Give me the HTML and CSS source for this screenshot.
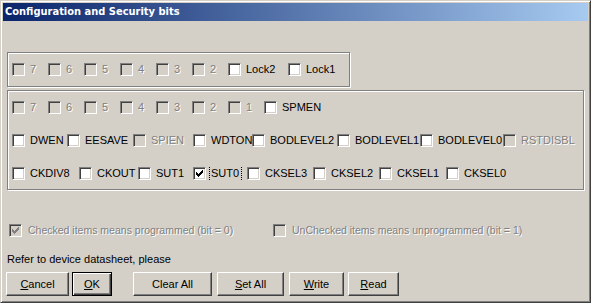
FILE: index.html
```html
<!DOCTYPE html>
<html>
<head>
<meta charset="utf-8">
<link rel="stylesheet" href="styles.css">
</head>
<body>
<div class="window">
  <div class="titlebar">Configuration and Security bits</div>
  <div class="client">
    <div class="group g-lock">
      <div class="row r-lock">
        <label class="item dis"><span class="cb"></span><span class="lbl">7</span></label>
        <label class="item dis"><span class="cb"></span><span class="lbl">6</span></label>
        <label class="item dis"><span class="cb"></span><span class="lbl">5</span></label>
        <label class="item dis"><span class="cb"></span><span class="lbl">4</span></label>
        <label class="item dis"><span class="cb"></span><span class="lbl">3</span></label>
        <label class="item dis"><span class="cb"></span><span class="lbl">2</span></label>
        <label class="item"><span class="cb"></span><span class="lbl">Lock2</span></label>
        <label class="item"><span class="cb"></span><span class="lbl">Lock1</span></label>
      </div>
    </div>
    <div class="group g-fuse">
      <div class="row r-bits">
        <label class="item dis"><span class="cb"></span><span class="lbl">7</span></label>
        <label class="item dis"><span class="cb"></span><span class="lbl">6</span></label>
        <label class="item dis"><span class="cb"></span><span class="lbl">5</span></label>
        <label class="item dis"><span class="cb"></span><span class="lbl">4</span></label>
        <label class="item dis"><span class="cb"></span><span class="lbl">3</span></label>
        <label class="item dis"><span class="cb"></span><span class="lbl">2</span></label>
        <label class="item dis"><span class="cb"></span><span class="lbl">1</span></label>
        <label class="item"><span class="cb"></span><span class="lbl">SPMEN</span></label>
      </div>
      <div class="row r-high">
        <label class="item"><span class="cb"></span><span class="lbl">DWEN</span></label>
        <label class="item"><span class="cb"></span><span class="lbl">EESAVE</span></label>
        <label class="item dis"><span class="cb"></span><span class="lbl">SPIEN</span></label>
        <label class="item"><span class="cb"></span><span class="lbl">WDTON</span></label>
        <label class="item"><span class="cb"></span><span class="lbl">BODLEVEL2</span></label>
        <label class="item"><span class="cb"></span><span class="lbl">BODLEVEL1</span></label>
        <label class="item"><span class="cb"></span><span class="lbl">BODLEVEL0</span></label>
        <label class="item dis"><span class="cb"></span><span class="lbl">RSTDISBL</span></label>
      </div>
      <div class="row r-low">
        <label class="item"><span class="cb"></span><span class="lbl">CKDIV8</span></label>
        <label class="item"><span class="cb"></span><span class="lbl">CKOUT</span></label>
        <label class="item"><span class="cb"></span><span class="lbl">SUT1</span></label>
        <label class="item"><span class="cb"><svg class="chk" width="7" height="7" viewBox="0 0 7 7" shape-rendering="crispEdges"><path d="M6 0h1v1h-1z M5 1h2v1h-2z M0 2h1v1h-1z M4 2h3v1h-3z M0 3h2v1h-2z M3 3h3v1h-3z M0 4h5v1h-5z M1 5h3v1h-3z M2 6h1v1h-1z"/></svg></span><span class="lbl focus">SUT0</span></label>
        <label class="item"><span class="cb"></span><span class="lbl">CKSEL3</span></label>
        <label class="item"><span class="cb"></span><span class="lbl">CKSEL2</span></label>
        <label class="item"><span class="cb"></span><span class="lbl">CKSEL1</span></label>
        <label class="item"><span class="cb"></span><span class="lbl">CKSEL0</span></label>
      </div>
    </div>
    <div class="legend">
      <label class="item dis"><span class="cb"><svg class="chk" width="7" height="7" viewBox="0 0 7 7" shape-rendering="crispEdges"><path d="M6 0h1v1h-1z M5 1h2v1h-2z M0 2h1v1h-1z M4 2h3v1h-3z M0 3h2v1h-2z M3 3h3v1h-3z M0 4h5v1h-5z M1 5h3v1h-3z M2 6h1v1h-1z"/></svg></span><span class="lbl wide">Checked items means programmed (bit = 0)</span></label>
      <label class="item dis"><span class="cb"></span><span class="lbl wide">UnChecked items means unprogrammed (bit = 1)</span></label>
    </div>
    <div class="note">Refer to device datasheet, please</div>
    <div class="buttons">
      <button class="btn b-cancel"><u>C</u>ancel</button>
      <button class="btn b-ok default"><u>O</u>K</button>
      <button class="btn b-clear">Clear All</button>
      <button class="btn b-set"><u>S</u>et All</button>
      <button class="btn b-write"><u>W</u>rite</button>
      <button class="btn b-read"><u>R</u>ead</button>
    </div>
  </div>
</div>
</body>
</html>
```
FILE: styles.css
```css
html, body {
  margin: 0;
  padding: 0;
  background: #d4d0c8;
}
body {
  font-family: "Liberation Sans", Arial, sans-serif;
  font-size: 11px;
  color: #000;
}
.window {
  width: 591px;
  height: 303px;
  box-sizing: border-box;
  background: #d4d0c8;
  border: 1px solid;
  border-color: #d4d0c8 #404040 #404040 #d4d0c8;
  box-shadow: inset 1px 1px #fff, inset -1px -1px #808080;
  padding: 2px;
  overflow: hidden;
}
.titlebar {
  height: 18px;
  line-height: 18px;
  padding-left: 2px;
  background: linear-gradient(to right, #0a246a, #a6caf0);
  color: #fff;
  font-family: "DejaVu Sans Condensed", "Liberation Sans", sans-serif;
  font-weight: bold;
  font-size: 11px;
  white-space: nowrap;
}
.client {
  display: flex;
  flex-direction: column;
  align-items: flex-start;
}
.group {
  box-sizing: border-box;
  border: 1px solid #808080;
  box-shadow: inset 1px 1px #fff, 1px 1px #fff;
  margin-left: 4px;
}
.g-lock {
  margin-top: 31px;
  width: 343px;
  height: 35px;
  padding: 10px 0 0 4px;
}
.g-fuse {
  margin-top: 3px;
  width: 577px;
  height: 100px;
  padding: 10px 0 0 4px;
  display: flex;
  flex-direction: column;
  gap: 20px;
}
.row {
  display: grid;
  align-items: center;
  height: 13px;
}
.r-lock { grid-template-columns: 36px 36px 36px 36px 36px 36px 60px auto; }
.r-bits { grid-template-columns: 36px 36px 36px 36px 36px 36px 36px auto; }
.r-high { grid-template-columns: 55px 66px 60px 59px 85px 83px 83px auto; }
.r-low { grid-template-columns: 67px 59px 55px 54px 66px 66px 67px auto; }
.item {
  display: flex;
  align-items: center;
  height: 13px;
  overflow: hidden;
  white-space: nowrap;
}
.cb {
  flex: none;
  position: relative;
  width: 13px;
  height: 13px;
  box-sizing: border-box;
  border: 1px solid;
  border-color: #808080 #fff #fff #808080;
  box-shadow: inset 1px 1px #404040, inset -1px -1px #d4d0c8;
  background: #fff;
}
.chk {
  position: absolute;
  left: 2px;
  top: 2px;
  fill: #000;
}
.lbl {
  margin-left: 5px;
  line-height: 13px;
}
.dis .cb { background: #d4d0c8; }
.dis .chk { fill: #808080; }
.dis .lbl {
  color: #808080;
  text-shadow: 1px 1px 0 #fff;
}
.focus {
  margin-left: 3px;
  padding: 1px 2px 1px 1px;
  border: 1px dotted #000;
}
.legend {
  margin-top: 34px;
  margin-left: 6px;
  display: grid;
  grid-template-columns: 264px auto;
  align-items: center;
}
.wide {
  margin-left: 6px;
  font-size: 10.5px;
}
.note {
  margin-top: 16px;
  margin-left: 4px;
  line-height: 13px;
}
.buttons {
  margin-top: 6px;
  margin-left: 3px;
  display: flex;
}
.btn {
  box-sizing: border-box;
  height: 24px;
  padding: 0;
  font: inherit;
  color: #000;
  background: #d4d0c8;
  border: 1px solid;
  border-color: #fff #404040 #404040 #fff;
  box-shadow: inset -1px -1px #808080;
  text-align: center;
}
.btn.default {
  border: 1px solid #000;
  box-shadow: inset 1px 1px #fff, inset -1px -1px #404040, inset -2px -2px #808080;
}
.b-cancel { width: 63px; }
.b-ok { width: 40px; margin-left: 3px; }
.b-clear { width: 79px; margin-left: 21px; }
.b-set { width: 67px; margin-left: 5px; }
.b-write { width: 55px; margin-left: 5px; }
.b-read { width: 51px; margin-left: 4px; }
```
